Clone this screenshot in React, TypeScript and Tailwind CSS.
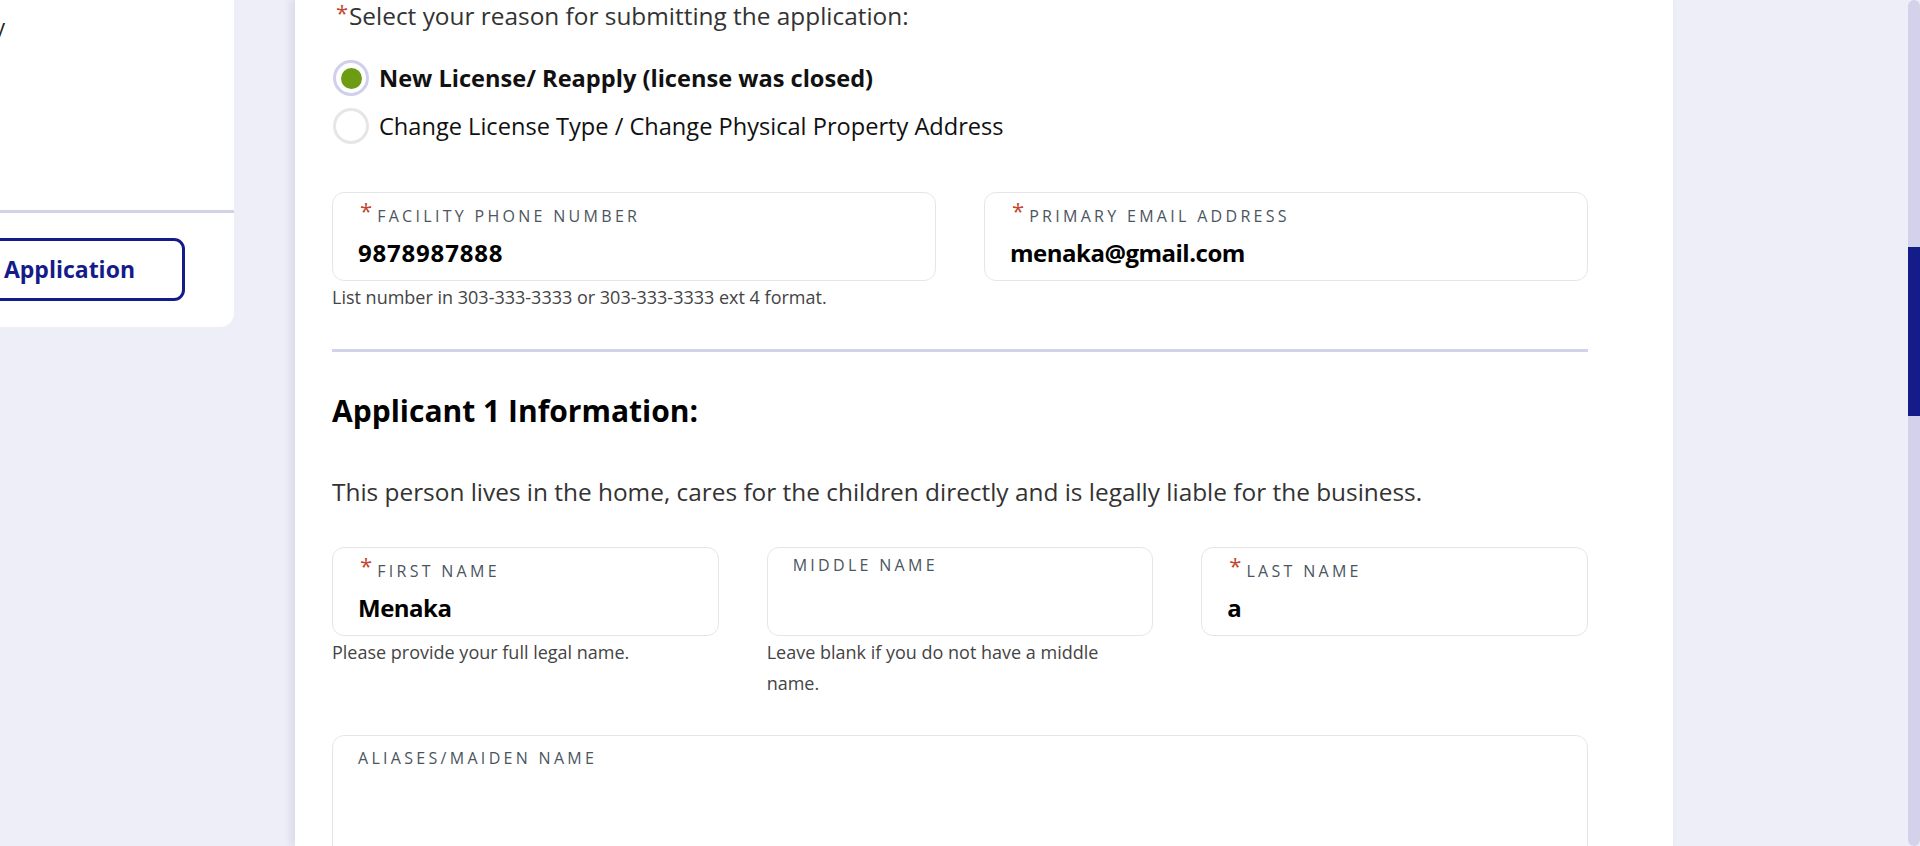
import React from 'react';

const FONT = { fontFamily: '"Open Sans", "Liberation Sans", sans-serif' };

interface FieldBoxProps {
  label: string;
  required?: boolean;
  value?: string;
  valueClass?: string;
  help?: string;
}

const Asterisk = () => (
  <span className="text-[#c4452f] text-[22px] leading-none mr-[5px]">*</span>
);

const FieldBox = ({ label, required, value, valueClass, help }: FieldBoxProps) => {
  return (
    <div className="flex flex-col">
      <div className="h-[89px] rounded-[12px] border border-[#e6e6e6] bg-white px-[25px]">
        {required ? (
          <div className="flex items-start pt-[6px] pl-[2px]">
            <Asterisk />
            <span className="mt-[7px] text-[16px] leading-[20px] tracking-[3.3px] text-[#4b5560] uppercase">
              {label}
            </span>
          </div>
        ) : (
          <div className="pt-[7px] text-[16px] leading-[20px] tracking-[3.3px] text-[#4b5560] uppercase">
            {label}
          </div>
        )}
        {value && (
          <div
            className={`mt-[11px] text-[24px] leading-[32px] font-bold text-black ${
              valueClass ?? ''
            }`}
          >
            {value}
          </div>
        )}
      </div>
      {help && (
        <p className="mt-[1px] text-[18px] leading-[31px] text-[#444]">{help}</p>
      )}
    </div>
  );
};

const Radio = ({ checked, label }: { checked?: boolean; label: string }) => (
  <div className="flex items-center h-[36px] gap-[10px]">
    <div
      className={`w-[36px] h-[36px] rounded-full border-[3px] flex items-center justify-center ${
        checked ? 'border-[#cfd0ea]' : 'border-[#e6e6e6]'
      }`}
    >
      {checked && <div className="w-[21px] h-[21px] rounded-full bg-[#6b9c12]" />}
    </div>
    <span
      className={`text-[23.6px] leading-[32px] ${
        checked ? 'font-bold text-[#111]' : 'text-[#111]'
      }`}
    >
      {label}
    </span>
  </div>
);

export default function App() {
  return (
    <div
      className="flex h-[846px] w-[1920px] overflow-hidden bg-[#eeeef8]"
      style={FONT}
    >
      {/* left summary card, partly scrolled off to the left */}
      <div className="-ml-[200px] w-[434px] shrink-0 self-start bg-white rounded-br-[14px]">
        <div className="h-[210px] pt-[12px]">
          <p className="text-right pr-[229px] text-[21px] leading-[30px] text-[#222] whitespace-nowrap">
            Primary Facility
          </p>
        </div>
        <div className="h-[3px] bg-[#d2d3ea]" />
        <div className="pt-[25px] pb-[26px] pl-[150px] pr-[49px]">
          <button className="w-full h-[63px] rounded-[11px] border-[3px] border-[#141c8a] text-[#141c8a] text-[23px] font-bold flex items-center justify-end pr-[47px] whitespace-nowrap">
            Submit&nbsp;&nbsp;Application
          </button>
        </div>
      </div>

      {/* main form card */}
      <div className="ml-[61px] w-[1378px] shrink-0 bg-white shadow-[-4px_0_8px_rgba(60,60,120,0.12)] pl-[37px] pr-[85px]">
        <div className="relative text-[24.4px] leading-[32px] text-[#333]">
          <span className="absolute left-[4px] top-[1px] text-[#c4452f] text-[22px] leading-none">
            *
          </span>
          <span className="pl-[17px]">
            Select your reason for submitting the application:
          </span>
        </div>

        <div className="mt-[28px] flex flex-col gap-[12px] pl-[1px]">
          <Radio checked label="New License/ Reapply (license was closed)" />
          <Radio label="Change License Type / Change Physical Property Address" />
        </div>

        <div className="mt-[48px] grid grid-cols-2 gap-x-[48px]">
          <FieldBox
            required
            label="Facility Phone Number"
            value="9878987888"
            valueClass="tracking-[0.8px]"
            help="List number in 303-333-3333 or 303-333-3333 ext 4 format."
          />
          <FieldBox
            required
            label="Primary Email Address"
            value="menaka@gmail.com"
            valueClass="tracking-[-0.5px]"
          />
        </div>

        <div className="mt-[36px] h-[3px] bg-[#d2d3ea]" />

        <h2 className="mt-[39px] text-[30px] leading-[40px] font-bold text-black">
          Applicant 1 Information:
        </h2>

        <p className="mt-[45px] text-[24.4px] leading-[32px] text-[#333]">
          This person lives in the home, cares for the children directly and is legally liable for the business.
        </p>

        <div className="mt-[39px] grid grid-cols-3 gap-x-[48px]">
          <FieldBox
            required
            label="First Name"
            value="Menaka"
            valueClass="tracking-[-0.5px]"
            help="Please provide your full legal name."
          />
          <FieldBox
            label="Middle Name"
            help="Leave blank if you do not have a middle name."
          />
          <FieldBox required label="Last Name" value="a" />
        </div>

        <div className="mt-[36px] h-[200px] rounded-[12px] border border-[#e6e6e6] px-[25px] pt-[12px]">
          <div className="text-[16px] leading-[20px] tracking-[3.3px] text-[#4b5560] uppercase">
            Aliases/Maiden Name
          </div>
        </div>
      </div>

      <div className="flex-1" />

      {/* scrollbar */}
      <div className="w-[12px] shrink-0 bg-[#d2d3ea] rounded-t-[6px] rounded-b-[6px] flex flex-col">
        <div className="h-[247px]" />
        <div className="h-[169px] bg-[#141c8a]" />
      </div>
    </div>
  );
}
